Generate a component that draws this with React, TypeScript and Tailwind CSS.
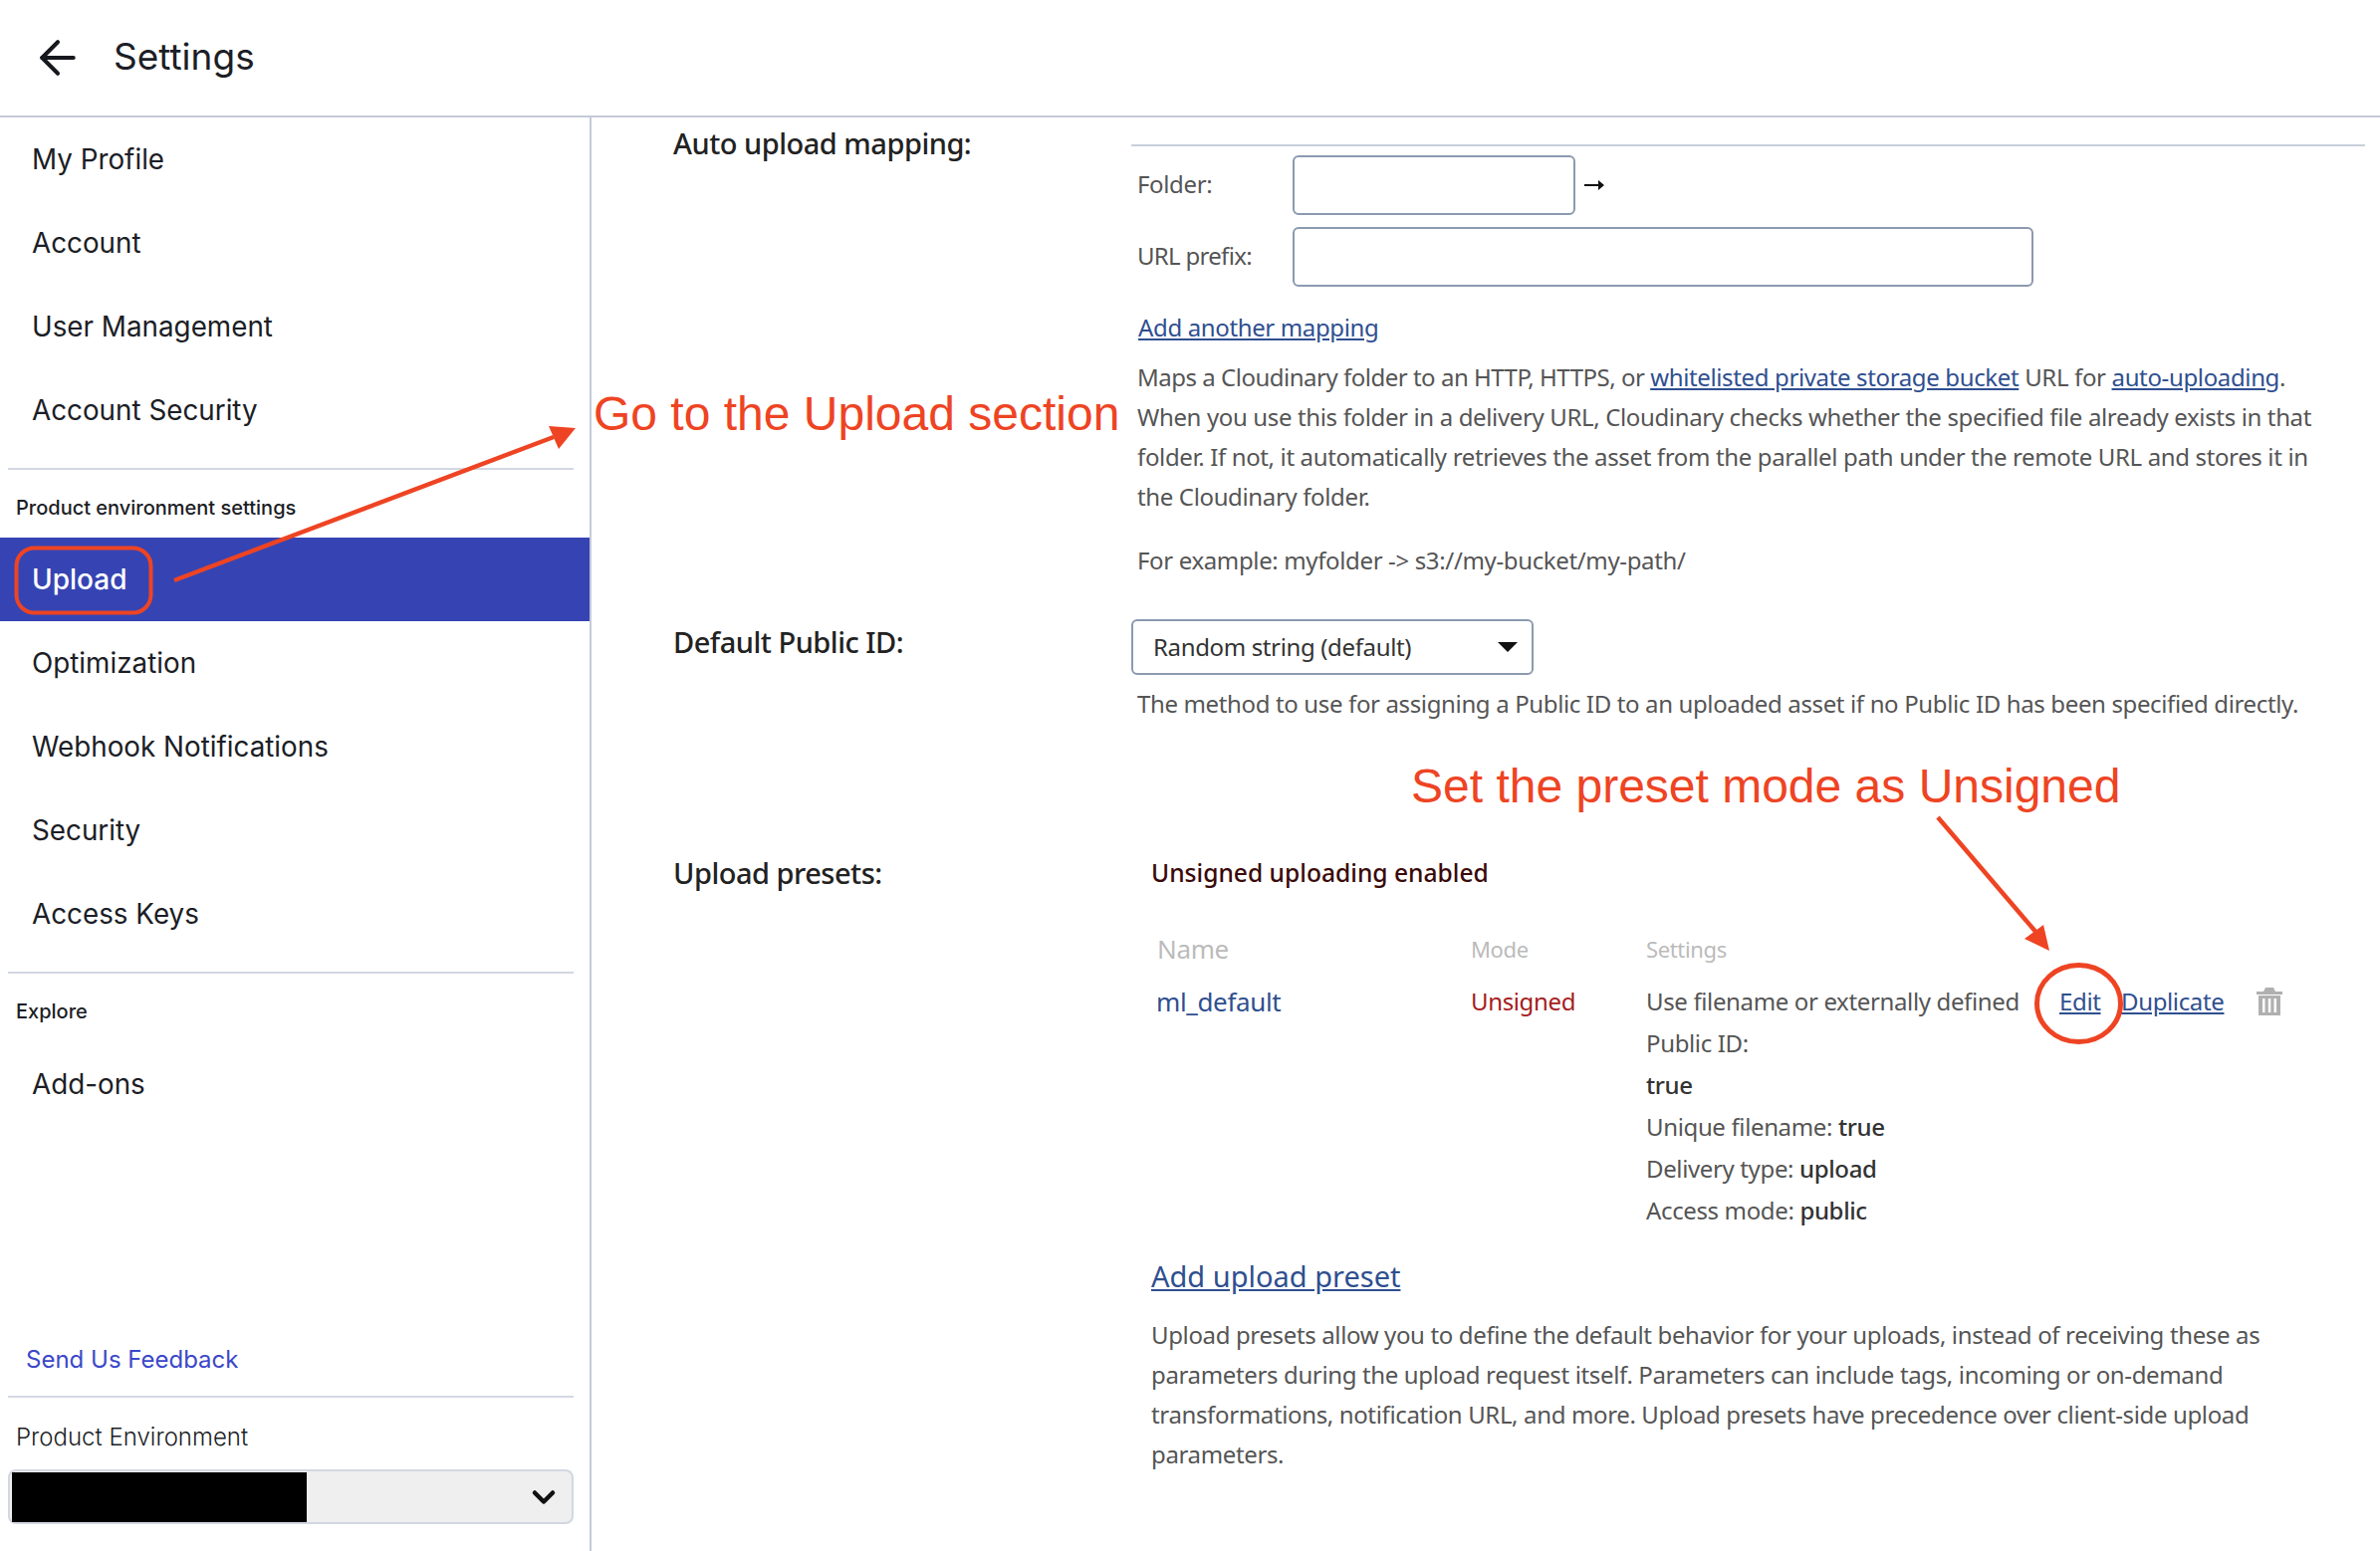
import { ArrowLeft, ChevronDown } from "lucide-react";

const topItems = ["My Profile", "Account", "User Management", "Account Security"];
const envItems = ["Optimization", "Webhook Notifications", "Security", "Access Keys"];

function NavItem({ label }: { label: string }) {
  return (
    <div className="flex h-[84px] items-center pl-[32px] pt-[2px] text-[27.8px] text-[#1c1e26]">
      {label}
    </div>
  );
}

function TrashIcon() {
  return (
    <svg width="26" height="28" viewBox="0 0 26 28" fill="#b0b0b0">
      <path d="M9 0h8l2 4h7v3H0V4h7z" />
      <path fillRule="evenodd" d="M2 8h22v20H2zM6 11v14h2.500V11zM11.800 11v14h2.500V11zM17.500 11v14H20V11z" />
    </svg>
  );
}

function Annotations() {
  return (
    <>
      <svg className="pointer-events-none absolute left-0 top-0" width="2390" height="1558">
        <rect x="16.500" y="550.500" width="135" height="65" rx="18" fill="none" stroke="#ee4423" strokeWidth="4" />
        <line x1="175" y1="583" x2="556" y2="439" stroke="#ee4423" strokeWidth="4.500" />
        <polygon points="578,430 551,428 561,451" fill="#ee4423" />
        <line x1="1946" y1="821" x2="2046" y2="938" stroke="#ee4423" strokeWidth="4.500" />
        <polygon points="2058,955 2033,943 2052,929" fill="#ee4423" />
        <ellipse cx="2087.500" cy="1008" rx="42" ry="38.500" fill="none" stroke="#ee4423" strokeWidth="5" />
      </svg>
      <div className="absolute left-[596px] top-[386px] whitespace-nowrap font-['Liberation_Sans',sans-serif] text-[48px] leading-[60px] text-[#ee4423]">
        Go to the Upload section
      </div>
      <div className="absolute left-[1417px] top-[760px] whitespace-nowrap font-['Liberation_Sans',sans-serif] text-[48px] leading-[60px] text-[#ee4423]">
        Set the preset mode as Unsigned
      </div>
    </>
  );
}

export default function App() {
  return (
    <div className="relative flex h-[1558px] w-[2390px] flex-col overflow-hidden bg-white font-['Inter',sans-serif]">
      <header className="flex h-[118px] shrink-0 items-center border-b-2 border-[#c5cad8]">
        <ArrowLeft size={54} strokeWidth={1.800} className="ml-[31px] text-[#16181d]" />
        <span className="mb-[2px] ml-[29px] text-[37px] text-[#1c1e26]">Settings</span>
      </header>

      <div className="flex flex-1">
        <aside className="flex w-[594px] shrink-0 flex-col border-r-2 border-[#c5cad8]">
          {topItems.map((item) => (
            <NavItem key={item} label={item} />
          ))}
          <div className="mx-[8px] mt-[16px] h-[2px] w-[568px] bg-[#d3d7e2]" />
          <div className="flex h-[68px] items-end pb-[15px] pl-[16px] text-[20px] font-medium text-[#1c1e26]">
            Product environment settings
          </div>
          <div className="flex h-[84px] w-[592px] items-center bg-[#3644b3] pl-[32px] text-[28px] font-medium text-white">
            Upload
          </div>
          {envItems.map((item) => (
            <NavItem key={item} label={item} />
          ))}
          <div className="mx-[8px] mt-[16px] h-[2px] w-[568px] bg-[#d3d7e2]" />
          <div className="flex h-[69px] items-start pt-[26px] pl-[16px] text-[20px] font-medium leading-[24px] text-[#1c1e26]">
            Explore
          </div>
          <NavItem label="Add-ons" />

          <div className="mt-auto pl-[26px] text-[24px] leading-[30px] text-[#3c48c8]">
            Send Us Feedback
          </div>
          <div className="mx-[8px] mt-[21px] h-[2px] w-[568px] bg-[#d3d7e2]" />
          <div className="mt-[25px] pl-[16px] text-[24px] font-light leading-[30px] text-[#1c1e26]">
            Product Environment
          </div>
          <div className="mx-[8px] mb-[27px] mt-[17px] flex h-[55px] w-[568px] items-center justify-between rounded-[8px] border-2 border-[#d3d7e2] bg-[#efefef] pl-[2px] pr-[10px]">
            <div className="h-[50px] w-[296px] bg-black" />
            <ChevronDown size={36} strokeWidth={3} className="text-[#111]" />
          </div>
        </aside>

        <main className="flex-1 pl-[82px] pr-[15px] font-['Noto_Sans',sans-serif] text-[24px] tracking-[-0.36px] text-[#555]">
          <section className="grid grid-cols-[460px_1fr]">
            <div className="pt-[8px] text-[29px] font-medium leading-[36px] tracking-[-0.5px] text-[#222]">
              Auto upload mapping:
            </div>
            <div>
              <div className="mt-[27px] h-[2px] bg-[#c9cfdb]" />
              <div className="mt-[9px] flex items-center pl-[6px]">
                <span className="-mt-[2px] w-[156px]">Folder:</span>
                <div className="h-[60px] w-[284px] rounded-[6px] border-2 border-[#8b9ab0]" />
                <svg className="ml-[9px]" width="20" height="12" viewBox="0 0 20 12" fill="#111">
                  <path d="M0 5h14V1l6 5-6 5V7H0z" />
                </svg>
              </div>
              <div className="mt-[12px] flex items-center pl-[6px]">
                <span className="-mt-[2px] w-[156px] tracking-[-0.7px]">URL prefix:</span>
                <div className="h-[60px] w-[744px] rounded-[6px] border-2 border-[#8b9ab0]" />
              </div>
              <div className="mt-[21px] pl-[7px] leading-[40px] text-[#2f4f8f] underline">
                Add another mapping
              </div>
              <p className="mt-[10px] whitespace-nowrap pl-[6px] leading-[40px]">
                <span className="tracking-[-0.49px]">Maps a Cloudinary folder to an HTTP, HTTPS, or </span>
                <span className="text-[#2f4f8f] underline">whitelisted private storage bucket</span> URL for{" "}
                <span className="text-[#2f4f8f] underline">auto-uploading</span>.
                <br />
                When you use this folder in a delivery URL, Cloudinary checks whether the specified file already exists in that
                <br />
                folder. If not, it automatically retrieves the asset from the parallel path under the remote URL and stores it in
                <br />
                the Cloudinary folder.
              </p>
              <p className="mt-[24px] pl-[6px] leading-[40px]">For example: myfolder -&gt; s3://my-bucket/my-path/</p>
            </div>
          </section>

          <section className="mt-[39px] grid grid-cols-[460px_1fr]">
            <div className="pt-[5px] text-[29px] font-medium leading-[36px] tracking-[-0.5px] text-[#222]">
              Default Public ID:
            </div>
            <div>
              <div className="flex h-[56px] w-[404px] items-center justify-between rounded-[6px] border-2 border-[#8b9ab0] pl-[20px] pr-[14px] text-[#333]">
                <span>Random string (default)</span>
                <svg width="20" height="10" viewBox="0 0 20 10" fill="#111">
                  <polygon points="0,0 20,0 10,10" />
                </svg>
              </div>
              <p className="mt-[9px] whitespace-nowrap pl-[6px] leading-[40px]">
                The method to use for assigning a Public ID to an uploaded asset if no Public ID has been specified directly.
              </p>
            </div>
          </section>

          <section className="mt-[132px] grid grid-cols-[480px_1fr]">
            <div className="text-[29px] font-medium leading-[36px] tracking-[-0.5px] text-[#222]">Upload presets:</div>
            <div>
              <div className="text-[24.600px] font-medium leading-[36px] tracking-normal text-[#3a0a0a]">
                Unsigned uploading enabled
              </div>
              <div className="mt-[40px] grid grid-cols-[315px_176px_1fr] pl-[6px]">
                <span className="text-[26px] leading-[36px] text-[#bbb]">Name</span>
                <span className="text-[22px] leading-[36px] text-[#bbb]">Mode</span>
                <span className="text-[22px] leading-[36px] text-[#bbb]">Settings</span>
              </div>
              <div className="mt-[14px] grid grid-cols-[315px_176px_1fr] pl-[6px]">
                <span className="-ml-[1px] text-[26px] leading-[42px] text-[#2f4f8f]">ml_default</span>
                <span className="leading-[42px] text-[#a51c1c]">Unsigned</span>
                <div className="leading-[42px]">
                  <div className="flex items-center">
                    <span className="w-[415px] whitespace-nowrap">Use filename or externally defined</span>
                    <span className="w-[62px] text-[#2f4f8f] underline">Edit</span>
                    <span className="w-[136px] text-[#2f4f8f] underline">Duplicate</span>
                    <TrashIcon />
                  </div>
                  <div>Public ID:</div>
                  <div className="font-medium text-[#333]">true</div>
                  <div>
                    Unique filename: <span className="font-medium text-[#333]">true</span>
                  </div>
                  <div>
                    Delivery type: <span className="font-medium text-[#333]">upload</span>
                  </div>
                  <div>
                    Access mode: <span className="font-medium text-[#333]">public</span>
                  </div>
                </div>
              </div>
              <div className="mt-[23px] text-[29px] leading-[44px] tracking-normal text-[#2f4f8f] underline">
                Add upload preset
              </div>
              <p className="mt-[17px] whitespace-nowrap leading-[40px]">
                Upload presets allow you to define the default behavior for your uploads, instead of receiving these as
                <br />
                parameters during the upload request itself. Parameters can include tags, incoming or on-demand
                <br />
                transformations, notification URL, and more. Upload presets have precedence over client-side upload
                <br />
                parameters.
              </p>
            </div>
          </section>
        </main>
      </div>

      <Annotations />
    </div>
  );
}
